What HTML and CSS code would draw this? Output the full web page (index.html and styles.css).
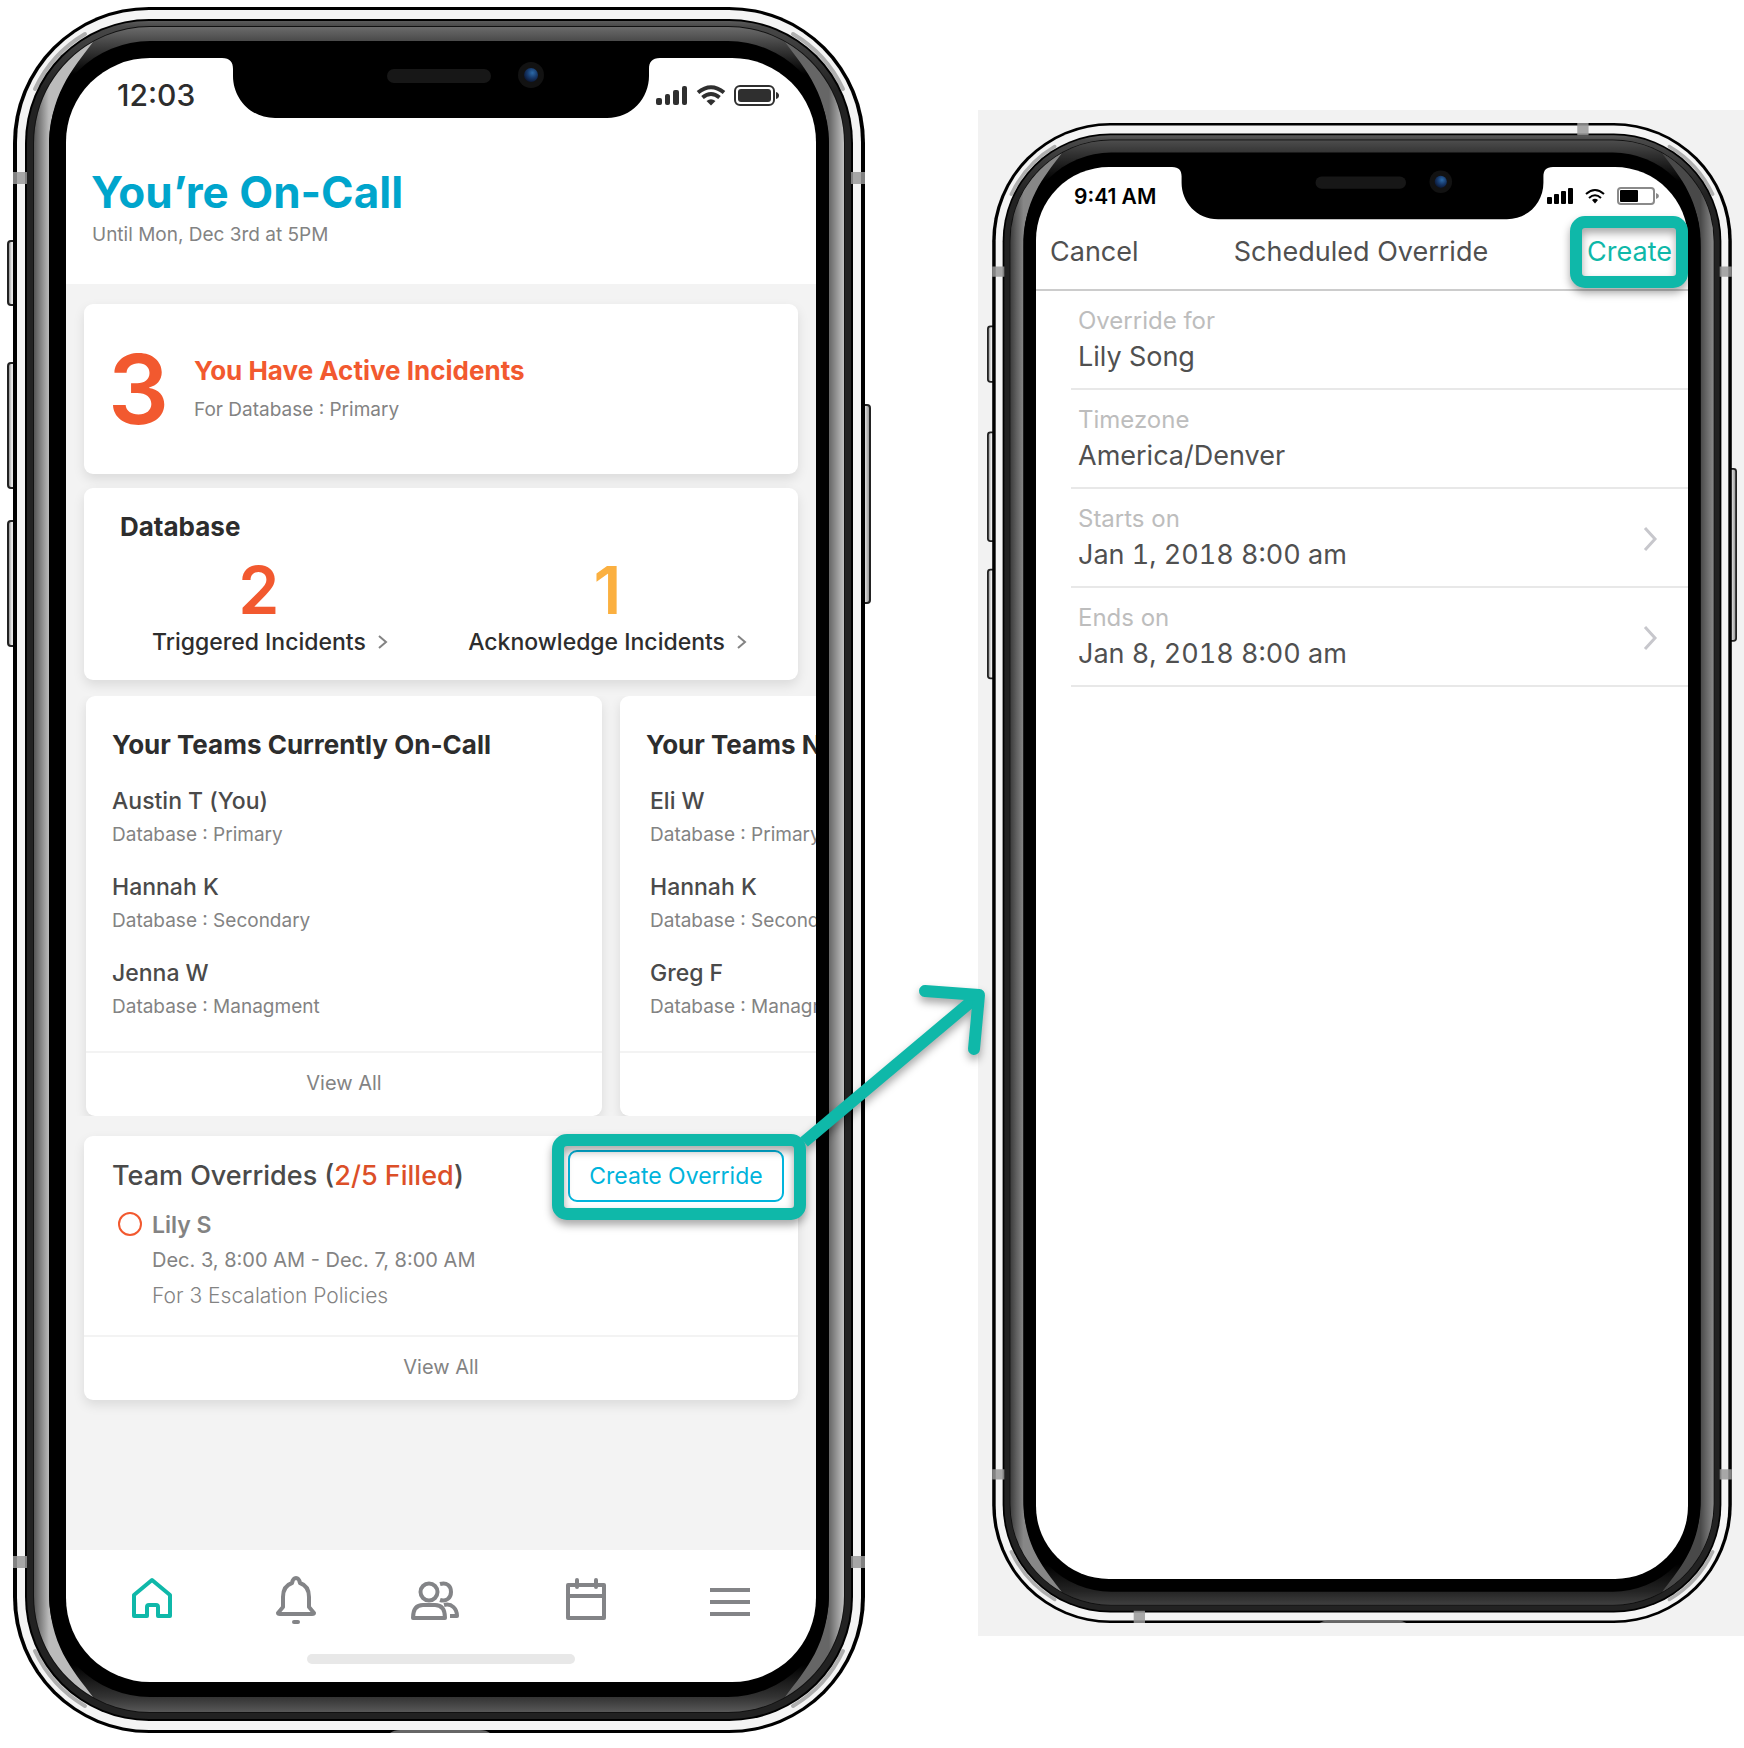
FILE: index.html
```html
<!DOCTYPE html>
<html lang="en">
<head>
<meta charset="utf-8">
<meta name="viewport" content="width=device-width, initial-scale=1">
<title>Create a scheduled override</title>
<link rel="stylesheet" href="styles.css">
</head>
<body>
<main class="guide">

  <section class="stage" aria-label="On-call home">
    <div class="phone">
      <svg class="shell" viewBox="7 7 864 1726" preserveAspectRatio="none" aria-hidden="true">
        <defs>
          <linearGradient id="key" x1="0" x2="1" y1="0" y2="0">
            <stop offset="0" stop-color="#777"/><stop offset=".4" stop-color="#f0f0f0"/><stop offset="1" stop-color="#888"/>
          </linearGradient>
          <linearGradient id="rim" gradientUnits="userSpaceOnUse" x1="0" x2="0" y1="21" y2="90">
            <stop offset="0" stop-color="#5c5c5c"/><stop offset=".08" stop-color="#484848"/><stop offset="1" stop-color="#222"/>
          </linearGradient>
          <linearGradient id="band" gradientUnits="userSpaceOnUse" x1="0" x2="0" y1="27" y2="1712">
            <stop offset="0" stop-color="#6b6b6b"/><stop offset=".009" stop-color="#474747"/><stop offset=".028" stop-color="#000"/>
            <stop offset=".972" stop-color="#000"/><stop offset=".991" stop-color="#333"/><stop offset="1" stop-color="#585858"/>
          </linearGradient>
          <linearGradient id="left-side" gradientUnits="userSpaceOnUse" x1="34" x2="49" y1="0" y2="0">
            <stop offset="0" stop-color="#555"/><stop offset="1" stop-color="#bbb"/>
          </linearGradient>
          <linearGradient id="right-side" gradientUnits="userSpaceOnUse" x1="829" x2="844" y1="0" y2="0">
            <stop offset="0" stop-color="#666"/><stop offset="1" stop-color="#c0c0c0"/>
          </linearGradient>
          <radialGradient id="lens" cx=".6" cy=".35" r=".7">
            <stop offset="0" stop-color="#2c6aa8"/><stop offset=".5" stop-color="#173a6c"/><stop offset="1" stop-color="#0a1430"/>
          </radialGradient>
          <g id="shell">
            <g fill="url(#key)" stroke="#222" stroke-width="2">
              <rect x="8" y="241" width="10" height="64" rx="3"/>
              <rect x="8" y="363" width="10" height="125" rx="3"/>
              <rect x="8" y="521" width="10" height="125" rx="3"/>
              <rect x="860" y="405" width="10" height="198" rx="3"/>
            </g>
            <rect x="13" y="7" width="852" height="1726" rx="136" fill="#000"/>
            <rect x="17" y="10" width="844" height="1720" rx="132" fill="#f4f4f4"/>
            <g fill="none" stroke="#777" stroke-width="4" stroke-linecap="round" opacity=".55">
              <path d="M35 89A126 126 0 0 1 85 34"/>
              <path d="M843 89A126 126 0 0 0 793 34"/>
              <path d="M35 1651A126 126 0 0 0 85 1706"/>
              <path d="M843 1651A126 126 0 0 1 793 1706"/>
            </g>
            <rect x="25" y="19" width="828" height="1702" rx="124" fill="#000"/>
            <rect x="27" y="21" width="824" height="1698" rx="122" fill="url(#rim)"/>
            <rect x="33" y="26" width="812" height="1687" rx="117" fill="#111"/>
            <rect x="34" y="27" width="810" height="1685" rx="116" fill="url(#band)"/>
            <path fill="url(#left-side)" d="M34 1596V143A116 116 0 0 1 93 42C72 70 49 95 49 150V1590C49 1645 72 1669 93 1697A116 116 0 0 1 34 1596Z"/>
            <path fill="url(#right-side)" d="M844 1596V143A116 116 0 0 0 785 42C806 70 829 95 829 150V1590C829 1645 806 1669 785 1697A116 116 0 0 0 844 1596Z"/>
            <rect x="34" y="27" width="810" height="1685" rx="116" fill="currentColor"/>
            <rect x="49" y="41" width="780" height="1656" rx="101" fill="#000"/>
            <g fill="#999" fill-opacity=".85">
              <path d="M13 172h14v12H13zM851 172h14v12h-14zM13 1556h14v12H13zM851 1556h14v12h-14z"/>
            </g>
            <path fill="#666" d="M390 1733q4-3 10-3h80q6 0 10 3z"/>
          </g>
          <g id="notch">
            <path d="M0-1V0C8 0 11 4 11 11V18C11 40 28 60 53 60H385C410 60 427 40 427 18V11C427 4 430 0 438 0V-1Z"/>
            <rect x="165" y="11" width="104" height="14" rx="7" fill="#171717"/>
            <circle cx="309" cy="17" r="13" fill="#121212"/>
            <circle cx="309" cy="17" r="7" fill="url(#lens)"/>
          </g>
        </defs>
        <use href="#shell"/>
      </svg>

      <div class="screen home">
        <header class="home-head">
          <div class="status">
            <span class="status-time">12:03</span>
            <svg class="notch" viewBox="0 0 438 60" aria-hidden="true"><use href="#notch"/></svg>
            <svg class="status-icons" width="124" height="22" viewBox="0 0 124 22" fill="#2f2f2f" aria-hidden="true">
              <rect x="0" y="14" width="6" height="7" rx="2"/><rect x="9" y="10" width="5" height="11" rx="2"/><rect x="17" y="6" width="6" height="15" rx="2"/><rect x="26" y="2" width="5" height="19" rx="2"/>
              <g fill="none" stroke="#2f2f2f" stroke-width="4"><path d="M42 8.500Q55 -2 68 8.500"/><path d="M46.500 13.500Q55 6.500 63.500 13.500"/></g>
              <path d="M50.500 17Q55 13.500 59.500 17L55 21.500Z"/>
              <rect x="79" y="2" width="39" height="19" rx="5" fill="none" stroke="#2f2f2f" stroke-width="2"/><rect x="82" y="5" width="33" height="13" rx="3"/><path d="M120 8q3 1 3 3.500t-3 3.500z"/>
            </svg>
          </div>
          <h1>You’re On-Call</h1>
          <p class="sub">Until Mon, Dec 3rd at 5PM</p>
        </header>

        <div class="feed">
          <section class="card active">
            <span class="active-count">3</span>
            <div>
              <h2 class="active-title">You Have Active Incidents</h2>
              <p class="active-sub">For Database : Primary</p>
            </div>
          </section>

          <section class="card database">
            <h2>Database</h2>
            <div class="stats">
              <a class="stat" href="#triggered">
                <span class="stat-count">2</span>
                <span class="stat-label">Triggered Incidents</span>
                <svg class="stat-arrow" width="10" height="14" viewBox="0 0 10 14" aria-hidden="true"><path d="M1 1L8 7L1 13"/></svg>
              </a>
              <a class="stat stat-ack" href="#acknowledged">
                <span class="stat-count">1</span>
                <span class="stat-label">Acknowledge Incidents</span>
                <svg class="stat-arrow" width="10" height="14" viewBox="0 0 10 14" aria-hidden="true"><path d="M1 1L8 7L1 13"/></svg>
              </a>
            </div>
          </section>

          <div class="teams">
            <section class="card team">
              <h2>Your Teams Currently On-Call</h2>
              <ul class="people">
                <li><strong>Austin T (You)</strong><span>Database : Primary</span></li>
                <li><strong>Hannah K</strong><span>Database : Secondary</span></li>
                <li><strong>Jenna W</strong><span>Database : Managment</span></li>
              </ul>
              <a class="view-all" href="#current">View All</a>
            </section>
            <section class="card team team-next">
              <h2>Your Teams Next</h2>
              <ul class="people">
                <li><strong>Eli W</strong><span>Database : Primary</span></li>
                <li><strong>Hannah K</strong><span>Database : Secondary</span></li>
                <li><strong>Greg F</strong><span>Database : Managment</span></li>
              </ul>
              <a class="view-all" href="#next">View All</a>
            </section>
          </div>

          <section class="card overrides">
            <div class="overrides-head">
              <h2>Team Overrides (<em>2/5 Filled</em>)</h2>
              <div class="spot spot-override">
                <button class="outline-button" type="button">Create Override</button>
                <span class="ring">
                  <svg class="arrow" width="200" height="180" viewBox="0 0 200 180" aria-hidden="true">
                    <path d="M4 167L179 20"/><path class="arrow-head" d="M125 16L179 20L174 74"/>
                  </svg>
                </span>
              </div>
            </div>
            <div class="override">
              <span class="override-dot"></span>
              <div>
                <p class="override-name">Lily S</p>
                <p class="override-time">Dec. 3, 8:00 AM - Dec. 7, 8:00 AM</p>
                <p class="override-note">For 3 Escalation Policies</p>
              </div>
            </div>
            <a class="view-all" href="#overrides">View All</a>
          </section>
        </div>

        <footer class="tabs">
          <nav class="tab-row">
            <button class="tab tab-on" type="button" aria-label="Home"><svg viewBox="0 0 60 52"><path d="M12 42V21L30 6L48 21V42H36V33Q36 31 34 31H27Q25 31 25 33V42Z"/></svg></button>
            <button class="tab" type="button" aria-label="Incidents"><svg viewBox="0 0 60 52"><path d="M25 9Q26 4 29 4T33 9Q42 12 42 23V33L47 39Q47 40 45 40H13Q11 40 11 39L16 33V23Q16 12 25 9Z"/><path d="M27 48h4"/></svg></button>
            <button class="tab" type="button" aria-label="People"><svg viewBox="0 0 60 52"><circle cx="18" cy="18" r="8.500"/><path d="M2 44Q2 31 12 31H24Q34 31 34 44Z"/><path stroke-linecap="butt" d="M29 10C36 8 40 12 40 18S35 28 29 26"/><path stroke-linecap="butt" d="M33 31C41 29 46 35 46 42H39"/></svg></button>
            <button class="tab" type="button" aria-label="Schedule"><svg viewBox="0 0 60 52"><path d="M12 11H48V44H12Z"/><path d="M12 22H48M21 6V13M40 6V13"/></svg></button>
            <button class="tab" type="button" aria-label="Menu"><svg viewBox="0 0 60 52"><path stroke-linecap="butt" d="M10 16H50M10 28H50M10 40H50"/></svg></button>
          </nav>
          <span class="home-bar"></span>
        </footer>
      </div>
    </div>
  </section>

  <section class="stage stage-form" aria-label="Scheduled override form">
    <div class="phone phone-small">
      <svg class="shell" viewBox="7 7 864 1726" preserveAspectRatio="none" aria-hidden="true">
        <use href="#shell"/>
        <path fill="#999" fill-opacity=".85" d="M687 7h13v14h-13zM176 1719h13v14h-13z"/>
      </svg>
      <form class="screen form">
        <div class="status status-small">
          <span class="status-time">9:41 AM</span>
          <svg class="notch" viewBox="0 0 438 60" aria-hidden="true"><use href="#notch"/></svg>
          <svg class="status-icons" width="113" height="20" viewBox="0 0 113 20" aria-hidden="true">
            <rect x="0" y="11" width="5" height="7" rx="1"/><rect x="7" y="8" width="5" height="10" rx="1"/><rect x="14" y="5" width="5" height="13" rx="1"/><rect x="21" y="2" width="5" height="16" rx="1"/>
            <g fill="none" stroke="#000" stroke-width="2"><path d="M39 8Q48 0 57 8"/><path d="M42 12Q48 6.500 54 12"/></g>
            <path d="M45 14Q48 11.500 51 14L48 17.500Z"/>
            <rect x="71" y="2" width="36" height="16" rx="3" fill="none" stroke="#8a8a8a" stroke-width="2"/><rect x="73" y="4" width="18" height="12" rx="1"/><path fill="#8a8a8a" d="M109 7q3 1 3 3t-3 3z"/>
          </svg>
        </div>
        <div class="form-bar">
          <button class="bar-button" type="button">Cancel</button>
          <h2>Scheduled Override</h2>
          <div class="spot spot-create">
            <button class="bar-button bar-button-go" type="submit">Create</button>
            <span class="ring"></span>
          </div>
        </div>
        <ul class="fields">
          <li class="field"><div><span class="field-label">Override for</span><span class="field-value">Lily Song</span></div></li>
          <li class="field"><div><span class="field-label">Timezone</span><span class="field-value">America/Denver</span></div></li>
          <li class="field"><div><span class="field-label">Starts on</span><span class="field-value">Jan 1, 2018 8:00 am</span></div>
            <svg class="field-arrow" width="16" height="26" viewBox="0 0 16 26" aria-hidden="true"><path d="M3 2L13 13L3 24"/></svg></li>
          <li class="field"><div><span class="field-label">Ends on</span><span class="field-value">Jan 8, 2018 8:00 am</span></div>
            <svg class="field-arrow" width="16" height="26" viewBox="0 0 16 26" aria-hidden="true"><path d="M3 2L13 13L3 24"/></svg></li>
        </ul>
      </form>
    </div>
  </section>

</main>
</body>
</html>
```

FILE: styles.css
```css
:root {
  --teal: #0fb8a9;
  --orange: #f2592f;
  --ink: #2d2d2d;
  --grey: #838383;
}

* { box-sizing: border-box; }

body {
  margin: 0;
  background: #fff;
  color: var(--ink);
  font-family: Inter, "Liberation Sans", sans-serif;
}

h1, h2, p, ul { margin: 0; padding: 0; }
ul { list-style: none; }
a { color: inherit; text-decoration: none; }
button { margin: 0; padding: 0; border: 0; background: none; color: inherit; font: inherit; cursor: pointer; }
svg { display: block; }

.guide {
  display: grid;
  grid-template-columns: minmax(0, 978fr) minmax(0, 766fr);
  align-items: start;
}

.stage { padding: 7px 107px 15px 7px; }
.stage-form { margin-top: 110px; padding: 13px 7px 13px 9px; background: #f2f2f2; }

/* Device */
.phone { position: relative; padding: 51px 55px 51px 59px; color: transparent; }
.phone-small { padding: 44px 49px; color: rgba(0, 0, 0, 0.28); }
.shell { position: absolute; inset: 0; width: 100%; height: 100%; }

.screen {
  position: relative;
  display: flex;
  flex-direction: column;
  aspect-ratio: 750 / 1624;
  border-radius: 84px;
  background: #fff;
  color: var(--ink);
}

.status {
  display: grid;
  grid-template-columns: minmax(0, 1fr) 438px minmax(0, 1fr);
  align-items: center;
  height: 74px;
}
.status-time { padding-left: 51px; font-size: 30px; font-weight: 500; white-space: nowrap; }
.notch { align-self: start; width: 100%; color: #000; overflow: visible; }
.status-icons { justify-self: end; margin-right: 36px; }

/* Home screen */
.home-head { padding-bottom: 35px; }
.home-head h1 { margin: 34px 0 3px 25px; color: #00a5cc; font-size: 44px; font-weight: 700; line-height: 52px; }
.sub { padding-left: 26px; color: var(--grey); font-size: 19px; line-height: 28px; }

.feed { flex: 1; padding: 20px 18px; background: #f3f3f3; }

.card { border-radius: 9px; background: #fff; box-shadow: 0 5px 12px rgba(0, 0, 0, 0.1); }
.card h2 { font-size: 26px; font-weight: 700; line-height: 34px; }

.active { display: flex; align-items: center; min-height: 170px; padding: 0 24px; }
.active-count { min-width: 86px; color: var(--orange); font-size: 96px; font-weight: 600; line-height: 100px; }
.card .active-title { margin-bottom: 8px; color: var(--orange); }
.active-sub { color: var(--grey); font-size: 19px; line-height: 28px; }

.database { margin-top: 14px; padding: 22px 51px 22px 68px; }
.database h2 { margin: 0 0 16px -32px; }
.stats { display: flex; justify-content: space-between; }
.stat { display: grid; grid-template-columns: auto 10px; column-gap: 12px; align-items: center; row-gap: 6px; }
.stat-count { grid-column: 1; justify-self: center; color: var(--orange); font-size: 66px; font-weight: 600; line-height: 60px; }
.stat-ack .stat-count { grid-column: 1 / -1; color: #fbb040; }
.stat-label { grid-row: 2; font-size: 23px; font-weight: 500; line-height: 32px; }
.stat-arrow { grid-row: 2; fill: none; stroke: #838383; stroke-width: 2; }

.teams { display: flex; gap: 18px; margin: 16px -18px 20px; padding-left: 20px; overflow: hidden; }
.team { flex: 0 0 516px; }
.team h2 { padding: 32px 26px 0; white-space: nowrap; }
.people { display: grid; gap: 25px; padding: 25px 26px 31px; }
.team-next .people { padding-left: 30px; }
.people li { display: grid; gap: 7px; }
.people strong { color: #4a4a4a; font-size: 23px; font-weight: 500; line-height: 28px; }
.people span { color: var(--grey); font-size: 19px; line-height: 26px; }

.view-all {
  display: block;
  min-height: 65px;
  border-top: 2px solid #f3f3f3;
  color: var(--grey);
  font-size: 20px;
  line-height: 61px;
  text-align: center;
}

.overrides-head { display: flex; align-items: center; justify-content: space-between; padding: 14px 14px 0 28px; }
.overrides-head h2 { color: #4a4a4a; font-size: 27px; font-weight: 500; }
.overrides-head em { color: #dc4f28; font-style: normal; }
.outline-button { width: 216px; height: 52px; border: 2px solid #00b4dc; border-radius: 9px; color: #00b4dc; font-size: 23px; }

.override { display: flex; gap: 10px; padding: 6px 34px 22px; color: var(--grey); line-height: 35px; }
.override-dot { width: 24px; height: 24px; margin-top: 4px; border: 2px solid var(--orange); border-radius: 50%; }
.override-name { font-size: 23px; font-weight: 600; }
.override-time { font-size: 20px; }
.override-note { font-size: 21px; font-weight: 300; }

.tabs { display: flex; flex-direction: column; align-items: center; padding: 24px 0 18px; }
.tab-row { display: flex; justify-content: space-between; align-self: stretch; padding: 0 56px; }
.tab { width: 60px; color: #838487; }
.tab svg { width: 60px; height: 52px; fill: none; stroke: currentColor; stroke-width: 4; stroke-linejoin: round; stroke-linecap: round; }
.tab-on { color: var(--teal); }
.home-bar { width: 268px; height: 10px; margin-top: 28px; border-radius: 5px; background: #e8e8e8; }

/* Highlights drawn over the controls */
.spot { position: relative; }
.ring {
  position: absolute;
  z-index: 5;
  border: 12px solid var(--teal);
  border-radius: 15px;
  filter: drop-shadow(0 5px 4px rgba(0, 0, 0, 0.35));
  pointer-events: none;
}
.spot-override .ring { inset: -16px -22px -18px -16px; }
.spot-create .ring { inset: -16px -16px -16px -17px; }
.arrow { position: absolute; bottom: 53px; left: calc(100% + 6px); fill: none; stroke: var(--teal); stroke-width: 12; }
.arrow-head { stroke-linecap: round; stroke-linejoin: round; }
.home { z-index: 2; }

/* Override form */
.form { aspect-ratio: 652 / 1412; border-radius: 73px; color: #505050; }
.status-small { grid-template-columns: minmax(0, 1fr) 381px minmax(0, 1fr); height: 52px; }
.status-small .status-time { padding: 6px 0 0 38px; color: #000; font-size: 21px; font-weight: 600; }
.status-small .status-icons { margin: 6px 28px 0 0; }

.form-bar {
  display: grid;
  grid-template-columns: 1fr auto 1fr;
  align-items: center;
  padding: 13px 16px 17px 14px;
  border-bottom: 2px solid #ccc;
  font-size: 27px;
  line-height: 40px;
}
.form-bar h2 { font-size: 27px; font-weight: 400; white-space: nowrap; }
.bar-button { justify-self: start; }
.bar-button-go { color: var(--teal); }
.spot-create { justify-self: end; }
.spot-create button { display: block; }

.fields { margin-left: 35px; }
.field { display: flex; align-items: center; justify-content: space-between; padding: 14px 30px 11px 7px; border-bottom: 2px solid #e8e8e8; }
.field-label, .field-value { display: block; }
.field-label { color: #bdbdbd; font-size: 24px; line-height: 32px; }
.field-value { font-size: 27px; font-variant-numeric: tabular-nums; line-height: 40px; }
.field-arrow { fill: none; stroke: #c7c7cc; stroke-width: 3; }
```
